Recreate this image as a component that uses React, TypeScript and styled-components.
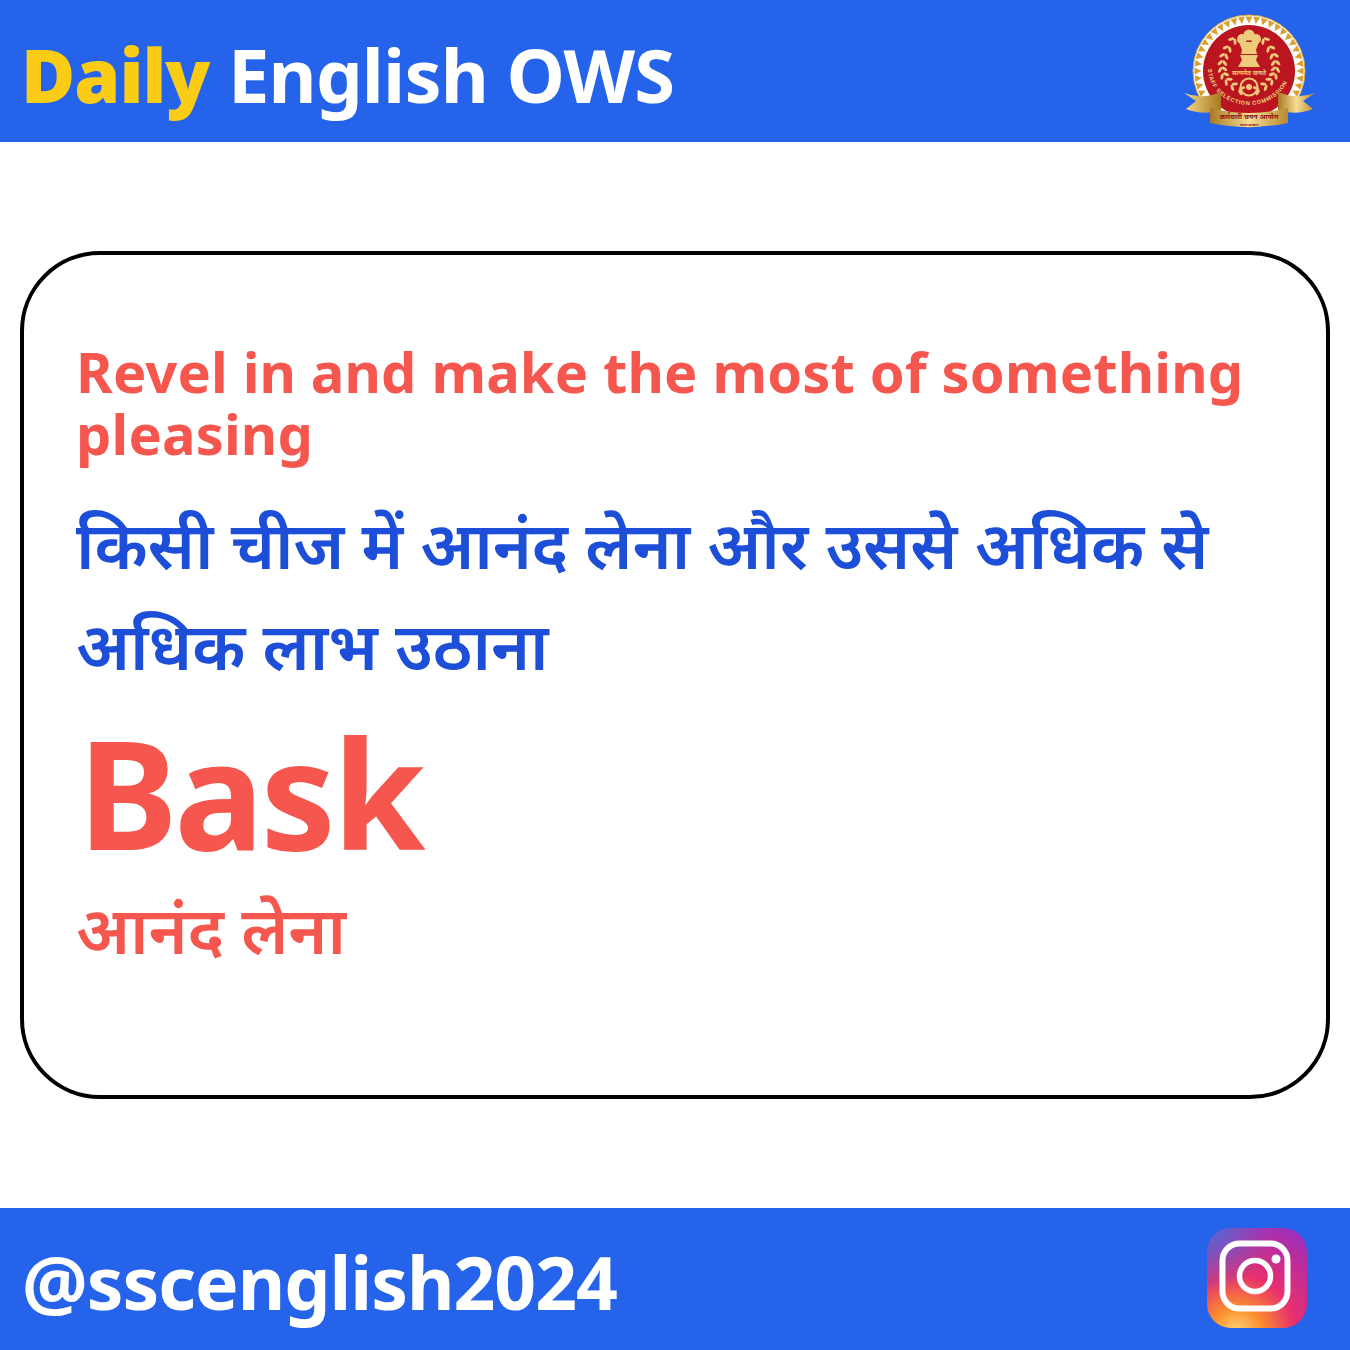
import type { ReactElement } from "react";
import styled, { createGlobalStyle } from "styled-components";

const GlobalStyle = createGlobalStyle`
  html, body {
    margin: 0;
    padding: 0;
    background: #fff;
  }
`;

const Page = styled.div`
  width: 1350px;
  height: 1350px;
  display: flex;
  flex-direction: column;
  justify-content: space-between;
  font-family: "Noto Sans", "Open Sans", sans-serif;
  font-weight: 700;
  overflow: hidden;
`;

const Bar = styled.div`
  height: 142px;
  background: #2563eb;
  display: flex;
  align-items: center;
  justify-content: space-between;
  padding: 0 22px;
  box-sizing: border-box;
`;

const Heading = styled.div`
  font-size: 74px;
  line-height: 1;
  color: #fff;
  letter-spacing: -0.8px;
  margin-top: 8px;
  margin-left: -1px;
`;

const Yellow = styled.span`
  color: #facc15;
  font-weight: 900;
  letter-spacing: -1px;
`;

const Handle = styled.div`
  font-size: 73.2px;
  line-height: 1;
  color: #fff;
  letter-spacing: -1px;
  margin-top: 6px;
`;

const Card = styled.div`
  margin: 0 20px;
  height: 848px;
  box-sizing: border-box;
  border: 4px solid #000;
  border-radius: 80px;
  padding: 85px 52px 0;
`;

const Definition = styled.div`
  font-size: 56px;
  line-height: 62px;
  letter-spacing: 0.16px;
  color: #f5564e;
`;

const Hindi = styled.div`
  font-size: 66px;
  line-height: 101px;
  font-weight: 600;
  color: #1d4ed8;
  margin-top: 29px;
`;

const Word = styled.div`
  font-size: 150px;
  line-height: 180px;
  letter-spacing: -3.5px;
  color: #f5564e;
  margin-top: 7px;
  margin-left: 2px;
`;

const Meaning = styled.div`
  font-size: 66px;
  line-height: 80px;
  font-weight: 600;
  color: #f5564e;
  margin-top: 6px;
`;

const LogoSlot = styled.div`
  width: 132px;
  height: 118px;
  margin-right: 12px;
`;

const InstaSlot = styled.div`
  width: 100px;
  height: 100px;
  margin-right: 21px;
  margin-top: -2px;
`;

const triangles = Array.from({ length: 44 }, (_, i) => (i * 360) / 44);

// leaves along a quadratic curve, one wreath side
const leaves = Array.from({ length: 9 }, (_, i) => {
  const t = i / 8;
  const p = (a: number, b: number, c: number) => (1 - t) * (1 - t) * a + 2 * (1 - t) * t * b + t * t * c;
  const d = (a: number, b: number, c: number) => 2 * (1 - t) * (b - a) + 2 * t * (c - b);
  const x = p(48, 24, 59);
  const y = p(30, 64, 79);
  const angle = (Math.atan2(d(30, 64, 79), d(48, 24, 59)) * 180) / Math.PI;
  return { x, y, angle };
});

function Wreath(): ReactElement {
  return (
    <g fill="#eecb7a">
      {leaves.map(l => (
        <g key={l.y} transform={`translate(${l.x} ${l.y}) rotate(${l.angle})`}>
          <ellipse cx="0" cy="-3" rx="3.2" ry="1.5" transform="rotate(-40)" />
          <ellipse cx="0" cy="3" rx="3.2" ry="1.5" transform="rotate(40)" />
        </g>
      ))}
    </g>
  );
}

function SscLogo(): ReactElement {
  return (
    <svg width="132" height="118" viewBox="0 0 132 118">
      <defs>
        <linearGradient id="gold" x1="0" x2="1" y1="0" y2="0">
          <stop offset="0" stopColor="#a87a22" />
          <stop offset="0.5" stopColor="#f5dd94" />
          <stop offset="1" stopColor="#b98a2c" />
        </linearGradient>
        <linearGradient id="tail" x1="0" x2="1" y1="0" y2="0">
          <stop offset="0" stopColor="#f3d98b" />
          <stop offset="1" stopColor="#a87a22" />
        </linearGradient>
        <path id="arc" d="M 24 57 A 41 36 0 0 0 106 57" fill="none" />
      </defs>
      <circle cx="65" cy="59" r="56" fill="#fff" stroke="#dba63a" strokeWidth="1" />
      {triangles.map(a => (
        <polygon key={a} points="61.5,4.5 68.5,4.5 65,11.5" fill="#dba02f" transform={`rotate(${a} 65 59)`} />
      ))}
      <circle cx="65" cy="59" r="46" fill="#bb1520" />
      <g fill="#eecb7a">
        <circle cx="65" cy="23" r="5.5" />
        <circle cx="58" cy="27" r="5" />
        <circle cx="72" cy="27" r="5" />
        <path d="M55 30 L75 30 L72 38 L73 42 L57 42 L58 38 Z" />
        <path d="M56 43 L74 43 L72 48 L76 55 L54 55 L58 48 Z" />
      </g>
      <Wreath />
      <g transform="matrix(-1 0 0 1 130 0)">
        <Wreath />
      </g>
      <text x="65" y="63" fontSize="6.5" fill="#eecb7a" textAnchor="middle" fontFamily="Noto Sans">
        सत्यमेव जयते
      </text>
      <circle cx="65" cy="75" r="8.5" fill="none" stroke="#eecb7a" strokeWidth="2" />
      <circle cx="65" cy="75" r="3" fill="#eecb7a" />
      <text fontSize="5.6" fill="#f3d98b" fontFamily="Liberation Sans" fontWeight="700" letterSpacing="0.7">
        <textPath href="#arc">STAFF SELECTION COMMISSION</textPath>
      </text>
      <path d="M0 81 Q18 88 37 80 L37 98 Q20 104 2 97 L12 89 Z" fill="url(#tail)" />
      <path d="M131 81 Q113 88 94 80 L94 98 Q111 104 129 97 L119 89 Z" fill="url(#gold)" />
      <path d="M26 96 Q65 106 104 96 L104 111 Q65 119 26 111 Z" fill="url(#gold)" />
      <text x="65" y="107" fontSize="7" fontWeight="700" fill="#8a1414" textAnchor="middle" fontFamily="Noto Sans">
        कर्मचारी चयन आयोग
      </text>
      <text x="65" y="113.5" fontSize="3.6" fill="#8a1414" textAnchor="middle" fontFamily="Noto Sans">
        भारत सरकार
      </text>
    </svg>
  );
}

function InstaLogo(): ReactElement {
  return (
    <svg width="100" height="100" viewBox="0 0 100 100">
      <defs>
        <radialGradient id="insta" cx="0.3" cy="1.05" r="1.15">
          <stop offset="0" stopColor="#fdd77a" />
          <stop offset="0.22" stopColor="#fb8f2e" />
          <stop offset="0.5" stopColor="#e8306c" />
          <stop offset="0.78" stopColor="#c02c98" />
          <stop offset="1" stopColor="#a030b8" />
        </radialGradient>
        <radialGradient id="instaBlue" cx="0" cy="0" r="0.65">
          <stop offset="0" stopColor="#4f6bd8" />
          <stop offset="1" stopColor="#4f6bd8" stopOpacity="0" />
        </radialGradient>
      </defs>
      <rect width="100" height="100" rx="24" fill="url(#insta)" />
      <rect width="100" height="100" rx="24" fill="url(#instaBlue)" />
      <rect x="15.5" y="15.5" width="65" height="65" rx="17" fill="none" stroke="#fff" strokeWidth="6" />
      <circle cx="48" cy="48" r="15.5" fill="none" stroke="#fff" strokeWidth="5.5" />
      <circle cx="69" cy="31" r="4.5" fill="#fff" />
    </svg>
  );
}

export default function App(): ReactElement {
  return (
    <Page>
      <GlobalStyle />
      <Bar>
        <Heading>
          <Yellow>Daily</Yellow> English OWS
        </Heading>
        <LogoSlot>
          <SscLogo />
        </LogoSlot>
      </Bar>
      <Card>
        <Definition>Revel in and make the most of something pleasing</Definition>
        <Hindi>किसी चीज में आनंद लेना और उससे अधिक से अधिक लाभ उठाना</Hindi>
        <Word>Bask</Word>
        <Meaning>आनंद लेना</Meaning>
      </Card>
      <Bar>
        <Handle>@sscenglish2024</Handle>
        <InstaSlot>
          <InstaLogo />
        </InstaSlot>
      </Bar>
    </Page>
  );
}
